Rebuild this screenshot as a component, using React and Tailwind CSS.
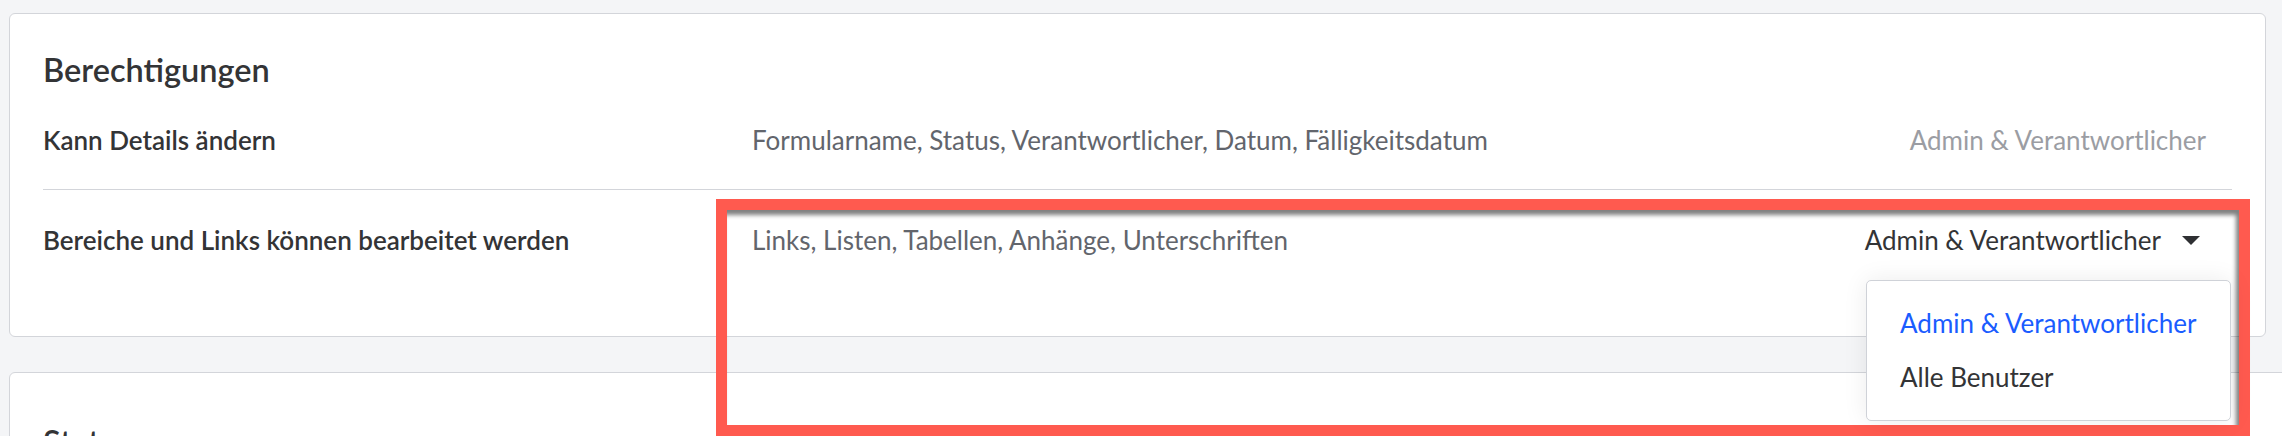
import React from 'react';

const Caret = () => (
  <svg width="18" height="9" viewBox="0 0 18 9" className="block">
    <path d="M0 0 H18 L9 9 Z" fill="#2f3033" />
  </svg>
);

const roles = ['Admin & Verantwortlicher', 'Alle Benutzer'];

const App = () => {
  return (
    <div
      className="relative h-[436px] w-[2282px] overflow-hidden bg-[#f4f5f7] pt-[13px] pl-[9px] text-[#333436]"
      style={{ fontFamily: 'Lato, "Open Sans", sans-serif' }}
    >
      {/* Berechtigungen */}
      <div className="w-[2257px] h-[324px] rounded-md border border-[#d3d5da] bg-white px-[33px] pt-[38px]">
        <h2 className="text-[32.5px] leading-[36px] font-semibold text-[#333436]">Berechtigungen</h2>

        <div className="flex border-b border-[#d3d5da] pt-[38px] pb-[34px] text-[26px] leading-[29px]">
          <div className="w-[709px] shrink-0 font-semibold">Kann Details ändern</div>
          <div className="flex-1 text-[#62656c]">
            Formularname, Status, Verantwortlicher, Datum, Fälligkeitsdatum
          </div>
          <div className="pr-[26px] text-[#9b9da3]">Admin &amp; Verantwortlicher</div>
        </div>

        <div className="flex pt-[36px] text-[26px] leading-[29px]">
          <div className="w-[709px] shrink-0 font-semibold">Bereiche und Links können bearbeitet werden</div>
          <div className="flex-1 text-[#62656c]">Links, Listen, Tabellen, Anhänge, Unterschriften</div>
          <div className="relative flex items-center gap-[21px] pr-[32px]">
            <span>Admin &amp; Verantwortlicher</span>
            <Caret />
            <div className="absolute right-[1px] top-[54px] z-10 w-[365px] rounded-[5px] border border-[#cfd2d8] bg-white pl-[33px] pt-[28px] pb-[28px] shadow-[0_0_24px_rgba(0,0,0,0.08)]">
              {roles.map((role, i) => (
                <div
                  key={role}
                  className={i === 0 ? 'text-[#1a5cff]' : 'mt-[25px] text-[#333436]'}
                >
                  {role}
                </div>
              ))}
            </div>
          </div>
        </div>
      </div>

      {/* Status */}
      <div className="mt-[35px] w-[2320px] rounded-md border border-[#d3d5da] bg-white px-[33px] pt-[51px]">
        <div className="flex items-start">
          <h2 className="text-[32.5px] leading-[36px] font-semibold">Status</h2>
          <div className="ml-auto mr-[101px] mt-[1px] text-[26px] leading-[29px] font-bold text-[#1f2023]">
            Bereich identifizieren, Gleichen Status beibehalten
          </div>
        </div>
      </div>

      {/* annotation frame */}
      <div className="pointer-events-none absolute left-[716px] top-[199px] h-[237px] w-[1534px] border-[11px] border-[#ff5a4f] shadow-[inset_-3px_5px_4px_rgba(0,0,0,0.5)]" />
    </div>
  );
};

export default App;
